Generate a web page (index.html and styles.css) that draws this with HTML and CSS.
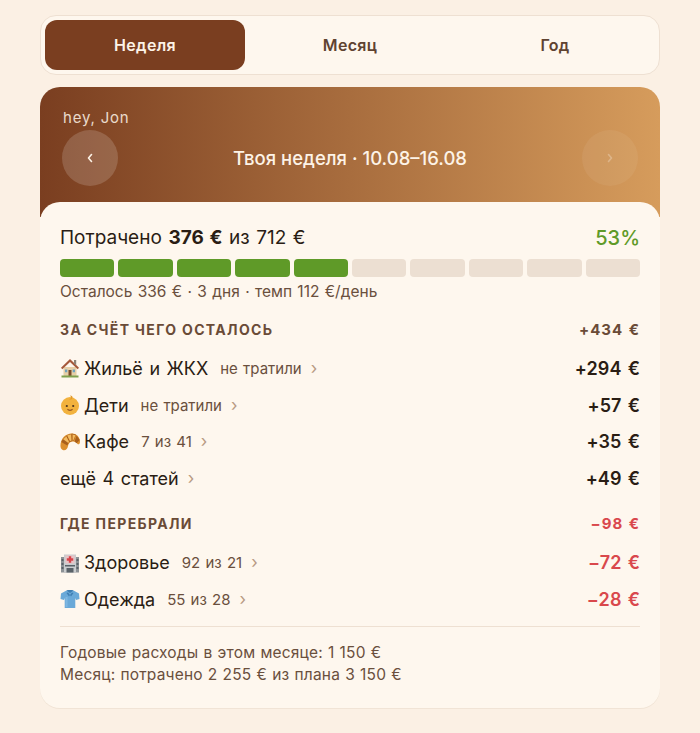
FILE: index.html
```html
<!DOCTYPE html>
<html lang="ru">
<head>
<meta charset="utf-8">
<title>Твоя неделя</title>
<link rel="stylesheet" href="styles.css">
</head>
<body>
<main class="page">
  <nav class="tabs">
    <div class="tab active">Неделя</div>
    <div class="tab">Месяц</div>
    <div class="tab">Год</div>
  </nav>
  <section class="card">
    <header class="hero">
      <div class="hello">hey, Jon</div>
      <div class="hero-row">
        <div class="nav-btn prev"><svg viewBox="0 0 10 14" class="nav-icon"><path d="M6.500 3.500 3.500 7l3 3.500"/></svg></div>
        <div class="hero-title">Твоя неделя · 10.08–16.08</div>
        <div class="nav-btn next"><svg viewBox="0 0 10 14" class="nav-icon"><path d="M3.500 3.500 6.500 7l-3 3.500"/></svg></div>
      </div>
    </header>
    <div class="body">
      <div class="summary">
        <div>Потрачено <b>376 €</b> из 712 €</div>
        <div class="pct">53%</div>
      </div>
      <div class="segments">
        <i class="seg on"></i><i class="seg on"></i><i class="seg on"></i><i class="seg on"></i><i class="seg on"></i>
        <i class="seg"></i><i class="seg"></i><i class="seg"></i><i class="seg"></i><i class="seg"></i>
      </div>
      <div class="left">Осталось 336 € · 3 дня · темп 112 €/день</div>

      <div class="section-head first"><span>ЗА СЧЁТ ЧЕГО ОСТАЛОСЬ</span><span class="sum">+434 €</span></div>
      <div class="row">
        <div class="row-main">
          <svg class="emoji" viewBox="0 0 20 20"><path fill="#e6cfa8" d="M3.500 9h13v9h-13z"/><path fill="#a5583a" d="M10 1 1 9.800l1.300 1.400L10 4l7.700 7.200L19 9.800z"/><path fill="#8d8478" d="M14 2h2.200v5.500L14 5.500z"/><path fill="#7a4a2a" d="M8.500 12h3v6h-3z"/><path fill="#6fa3bf" d="M5 11.500h2.300v2.800H5zM12.700 11.500H15v2.800h-2.300z"/><path fill="#7fa04e" d="M1.500 17.500h17V19.500h-17z"/></svg>
          <span class="name">Жильё и ЖКХ</span><span class="note">не тратили</span><span class="chev">›</span>
        </div>
        <span class="amount">+294 €</span>
      </div>
      <div class="row">
        <div class="row-main">
          <svg class="emoji" viewBox="0 0 20 20"><circle cx="10" cy="11" r="9" fill="#f2b23e"/><path fill="#e39a2a" d="M10 .6c2 0 3 1.200 2.400 2.700-.5 1.200-2.200 1.500-3.400 1 1.100-.1 2-.7 2-1.700S10.400 1.300 10 .6z"/><circle cx="6.800" cy="11" r="1.100" fill="#4a3320"/><circle cx="13.200" cy="11" r="1.100" fill="#4a3320"/><path d="M7.800 14.500c1.400 1 3 1 4.400 0" fill="none" stroke="#9a5a24" stroke-width="1.200" stroke-linecap="round"/></svg>
          <span class="name">Дети</span><span class="note">не тратили</span><span class="chev">›</span>
        </div>
        <span class="amount">+57 €</span>
      </div>
      <div class="row">
        <div class="row-main">
          <svg class="emoji" viewBox="0 0 20 20"><path fill="#dc8f2e" d="M.5 14.500C0 7.500 5 1.500 12 1.500c4.200 0 7.500 3 8 7.500.2 2.500-1.200 4-2.500 3-1-1.500-2.500-2.500-4.500-2.500-3 0-4.500 2-5 4.500-.4 2.500-2 4.500-4.500 4.200C2 18 .7 16.500.5 14.500z"/><path fill="#a9601c" d="M5.500 4.500 8.500 11l-1.200 2.500-6-3.500L2 8.500zM11.500 1.600l.7 7.400-2.700 1.200L6 4zM16 2.800 13.700 9l-1.200-.2-.3-7.200zM19.800 8l-3.200 3.200-2-1.700 2-6z"/><path fill="#f4bc62" d="M6.300 4.600 9 10l-1 .8-4.800-3.600zM11 2.300l.6 6.200-1.600.8L7.200 3.600zM15.500 3.200l-2.200 5.400-.5-.1-.2-6z"/></svg>
          <span class="name">Кафе</span><span class="note">7 из 41</span><span class="chev">›</span>
        </div>
        <span class="amount">+35 €</span>
      </div>
      <div class="row">
        <div class="row-main">
          <span class="name">ещё 4 статей</span><span class="chev">›</span>
        </div>
        <span class="amount">+49 €</span>
      </div>

      <div class="section-head"><span>ГДЕ ПЕРЕБРАЛИ</span><span class="sum over">−98 €</span></div>
      <div class="row">
        <div class="row-main">
          <svg class="emoji" viewBox="0 0 20 20"><path fill="#8d9296" d="M1 4h18v15.500H1z"/><path fill="#c9ccce" d="M4 1.500h12v18H4z"/><path fill="#e8c4c6" d="M5.500 2.500h9v8h-9z"/><path fill="#d8434a" d="M8.800 3.300h2.400v2h2v2.400h-2v2H8.800v-2h-2V5.300h2z"/><path fill="#5a6268" d="M1.500 6h2v2h-2zM1.500 10h2v2h-2zM1.500 14h2v2h-2zM16.500 6h2v2h-2zM16.500 10h2v2h-2zM16.500 14h2v2h-2zM5 12h10v1.500H5zM6.500 15h7v4.500h-7z"/></svg>
          <span class="name">Здоровье</span><span class="note">92 из 21</span><span class="chev">›</span>
        </div>
        <span class="amount over">−72 €</span>
      </div>
      <div class="row">
        <div class="row-main">
          <svg class="emoji" viewBox="0 0 20 20"><path fill="#6aa9d8" d="M6.500 1.500 1 4.500.5 10l3.500 1 .7-2v10h10.600V9l.7 2 3.500-1-.5-5.500-5.500-3z"/><path fill="#3f7fb3" d="M6.500 1.500 10 4l3.500-2.500L12 1H8zM8 3.500 10 6 9 7.500 6.500 4zM12 3.500 10 6l1 1.500L13.500 4z"/><path fill="#8cc2e8" d="M5.500 8h2v10h-2z" opacity=".6"/></svg>
          <span class="name">Одежда</span><span class="note">55 из 28</span><span class="chev">›</span>
        </div>
        <span class="amount over">−28 €</span>
      </div>

      <footer class="foot">
        <div>Годовые расходы в этом месяце: 1 150 €</div>
        <div>Месяц: потрачено 2 255 € из плана 3 150 €</div>
      </footer>
    </div>
  </section>
</main>
</body>
</html>
```
FILE: styles.css
```css
* { box-sizing: border-box; }
html, body { margin: 0; height: 100%; }
body {
  background: #fbf0e4;
  font-family: Inter, "Liberation Sans", sans-serif;
  color: #2a1d14;
  overflow: hidden;
}
.page { padding: 15px 40px 0; }
.tabs {
  display: grid;
  grid-template-columns: repeat(3, 1fr);
  gap: 5px;
  height: 60px;
  padding: 4px;
  background: #fef7ee;
  border: 1px solid #eee0d2;
  border-radius: 16px;
}
.tab {
  display: flex;
  align-items: center;
  justify-content: center;
  font-size: 16px;
  letter-spacing: .3px;
  font-weight: 600;
  color: #5f4331;
  border-radius: 12px;
}
.tab.active { background: #7a3e20; color: #fdf3e7; }
.card {
  margin-top: 12px;
  border-radius: 20px;
  background: #fef7ee;
  box-shadow: 0 1px 0 #f1e4d6;
  overflow: hidden;
  height: 621px;
}
.hero {
  height: 130px;
  padding: 21px 22px 0;
  background: linear-gradient(90deg, #7a3e20 0%, #d69c5c 100%);
  color: #fdf3e7;
}
.hello {
  font-size: 15px;
  line-height: 20px;
  letter-spacing: .8px;
  margin-left: 1px;
  opacity: .85;
}
.hero-row {
  display: flex;
  align-items: center;
  justify-content: space-between;
  margin-top: 2px;
}
.nav-btn {
  width: 56px;
  height: 56px;
  border-radius: 50%;
  display: flex;
  align-items: center;
  justify-content: center;
  background: rgba(255, 255, 255, .16);
}
.nav-btn.next { background: rgba(255, 255, 255, .06); }
.nav-icon {
  width: 10px;
  height: 14px;
  fill: none;
  stroke: #fdf3e7;
  stroke-width: 1.600;
  stroke-linecap: round;
  stroke-linejoin: round;
}
.next .nav-icon { opacity: .3; }
.hero-title { font-size: 18.500px; font-weight: 500; }
.body {
  position: relative;
  margin-top: -15px;
  padding: 23px 20px 0;
  background: #fef7ee;
  border-radius: 20px 20px 0 0;
}
.summary {
  display: flex;
  justify-content: space-between;
  font-size: 19px;
  line-height: 26px;
  word-spacing: 1.200px;
}
.summary b { font-weight: 700; }
.pct { color: #5f9a28; font-weight: 500; font-size: 20px; }
.segments {
  display: grid;
  grid-template-columns: repeat(10, 1fr);
  gap: 4px;
  margin-top: 8px;
  height: 18px;
}
.seg { background: #ecdfd2; border-radius: 4px; display: block; }
.seg.on { background: #5f9a28; }
.left {
  margin-top: 5px;
  font-size: 15.500px;
  line-height: 20px;
  word-spacing: 1px;
  color: #6a4f3d;
}
.section-head {
  display: flex;
  justify-content: space-between;
  align-items: center;
  margin-top: 17px;
  height: 18px;
  font-size: 14px;
  font-weight: 700;
  letter-spacing: 1.350px;
  color: #6a4b37;
}
.section-head.first { margin-top: 18px; }
.sum { font-size: 15px; letter-spacing: 1px; word-spacing: 1px; }
.over { color: #d9484c; }
.row {
  display: flex;
  justify-content: space-between;
  align-items: center;
  height: 36.800px;
}
.section-head + .row { margin-top: 12px; }
.row-main { display: flex; align-items: center; }
.emoji { width: 20px; height: 20px; margin-right: 4px; flex: none; }
.name { font-size: 18px; word-spacing: 1.500px; }
.note { font-size: 15px; word-spacing: 1px; color: #6a4f3d; margin-left: 12px; }
.chev { font-size: 17px; color: #b89a82; margin-left: 9px; line-height: 1; }
.amount { font-size: 18px; font-weight: 600; letter-spacing: .1px; word-spacing: 1.500px; }
.amount.over { color: #d9484c; }
.foot {
  margin-top: 8px;
  padding-top: 15px;
  border-top: 1px solid #eee0d2;
  font-size: 15.500px;
  line-height: 22px;
  letter-spacing: .18px;
  word-spacing: .6px;
  color: #6a4f3d;
}
```
